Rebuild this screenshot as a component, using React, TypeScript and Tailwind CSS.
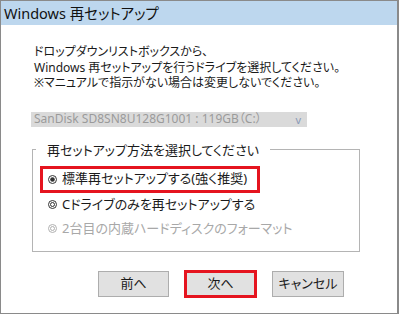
import React from 'react';

const font = "font-['Noto_Sans','Noto_Sans_CJK_JP',sans-serif] [font-feature-settings:'palt']";

const Radio = ({ checked, disabled }: { checked?: boolean; disabled?: boolean }) => {
  const c = disabled ? '#b0b0b0' : '#333333';
  return (
    <svg width="9" height="9" viewBox="0 0 9 9" className="shrink-0">
      <circle cx="4.5" cy="4.5" r="4" fill="#fff" stroke={c} strokeWidth="1" />
      {checked ? (
        <circle cx="4.5" cy="4.5" r="2.3" fill={c} />
      ) : (
        <circle cx="4.5" cy="4.5" r="2" fill="none" stroke={c} strokeWidth="1" />
      )}
    </svg>
  );
};

export default function App() {
  return (
    <div className={`w-[400px] h-[315px] bg-white ${font}`}>
      <div className="w-[399px] h-[314px] border border-[#8a8a8a] border-r-2 flex flex-col">
        {/* Title bar */}
        <div className="h-[24px] bg-[#bdd7ee] flex items-center pl-[3px] text-[14.5px] text-[#111] leading-none">
          Windows 再セットアップ
        </div>

        {/* Instructions */}
        <div className="mt-[19px] pl-[33px] text-[12px] leading-[15.5px] text-[#1a1a1a]">
          <p>ドロップダウンリストボックスから、</p>
          <p>Windows 再セットアップを行うドライブを選択してください。</p>
          <p>※マニュアルで指示がない場合は変更しないでください。</p>
        </div>

        {/* Drive dropdown (disabled) */}
        <div className="mt-[21px] ml-[30px] w-[276px] h-[15px] bg-[#dadada] flex items-center justify-between pl-[3px] pr-[6px] text-[12px] leading-none text-[#9a9a9a]">
          <span>SanDisk SD8SN8U128G1001 : 119GB（C:）</span>
          <span className="text-[11px] text-[#8a9bb8]">v</span>
        </div>

        {/* Method group */}
        <fieldset className="mt-[15px] ml-[31px] w-[328px] border border-[#b4b4b4] px-[3px] pt-[8px] pb-[10px]">
          <legend className="px-[11px] text-[13px] leading-[16px] text-[#1a1a1a]">
            再セットアップ方法を選択してください
          </legend>
          <div className="ml-[4px] w-[220px] h-[27px] border-[3px] border-[#e5141f] flex items-center gap-[5px] pl-[5px] text-[13px] text-[#1a1a1a]">
            <Radio checked />
            <span>標準再セットアップする(強く推奨)</span>
          </div>
          <div className="ml-[4px] h-[24px] border-[3px] border-transparent flex items-center gap-[5px] pl-[5px] text-[13px] text-[#1a1a1a]">
            <Radio />
            <span>Cドライブのみを再セットアップする</span>
          </div>
          <div className="ml-[4px] h-[24px] border-[3px] border-transparent flex items-center gap-[5px] pl-[5px] text-[13px] text-[#a8a8a8]">
            <Radio disabled />
            <span>2台目の内蔵ハードディスクのフォーマット</span>
          </div>
        </fieldset>

        {/* Buttons */}
        <div className="mt-[18px] ml-[97px] flex items-center gap-[15px] text-[13px] text-[#1a1a1a]">
          <button className="w-[71px] h-[26px] bg-[#e1e1e1] border border-[#adadad] leading-none">前へ</button>
          <button className="w-[73px] h-[28px] bg-[#e1e1e1] border-[3px] border-[#e5141f] leading-none">次へ</button>
          <button className="w-[72px] h-[26px] bg-[#e1e1e1] border border-[#adadad] leading-none">キャンセル</button>
        </div>
      </div>
    </div>
  );
}
